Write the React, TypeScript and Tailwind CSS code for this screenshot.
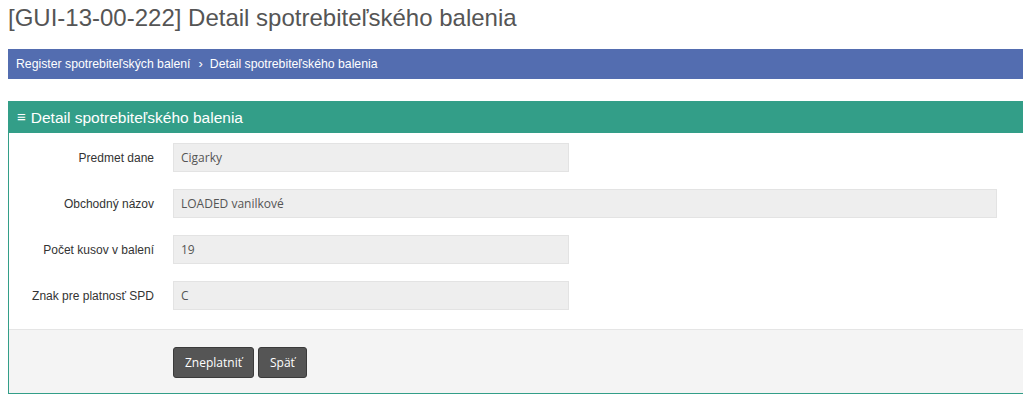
export default function App() {
  const rows: { label: string; value: string; wide?: boolean }[] = [
    { label: "Predmet dane", value: "Cigarky" },
    { label: "Obchodný názov", value: "LOADED vanilkové", wide: true },
    { label: "Počet kusov v balení", value: "19" },
    { label: "Znak pre platnosť SPD", value: "C" },
  ];

  return (
    <div className="h-[400px] w-[1023px] overflow-hidden bg-white font-['Liberation_Sans',Arial,sans-serif]">
      <div className="w-[1060px] pl-2">
        <h1 className="pt-[2px] text-[24px] leading-[32px] text-[#555555]">
          [GUI-13-00-222] Detail spotrebiteľského balenia
        </h1>

        <div className="mt-[15px] flex h-[30px] items-center bg-[#536db0] pl-2 text-[12.25px] text-white">
          <span>Register spotrebiteľských balení</span>
          <span className="ml-[8px] mr-[7px] text-[13px]">›</span>
          <span>Detail spotrebiteľského balenia</span>
        </div>

        <div className="mt-[22px] border border-[#339e88]">
          <div className="flex h-[31px] items-center bg-[#339e88] pl-2 text-[15.5px] text-white">
            <span className="mr-[5px] text-[15px] font-bold">≡</span>
            Detail spotrebiteľského balenia
          </div>

          <div className="flex flex-col gap-[17px] pt-[10px] pb-[19px]">
            {rows.map((r) => (
              <div key={r.label} className="flex items-center">
                <div className="w-[146px] pr-[1px] text-right text-[12px] text-[#333333]">{r.label}</div>
                <div
                  className={
                    (r.wide ? "w-[824px]" : "w-[396px]") +
                    " ml-[18px] flex h-[29px] items-center border border-[#e3e3e3] bg-[#eeeeee] pl-[7px] font-['Open_Sans',sans-serif] text-[12px] text-[#555555]"
                  }
                >
                  {r.value}
                </div>
              </div>
            ))}
          </div>

          <div className="flex h-[64px] items-center gap-[4px] border-t border-[#e5e5e5] bg-[#f4f4f4] pl-[164px] pt-[2px] font-['Open_Sans',sans-serif]">
            <button
              type="button"
              className="h-[31px] rounded-[3px] border border-[#3a3a3a] bg-[#555555] px-[11px] text-[12px] text-white"
            >
              Zneplatniť
            </button>
            <button
              type="button"
              className="h-[31px] rounded-[3px] border border-[#3a3a3a] bg-[#555555] px-[11px] text-[12px] text-white"
            >
              Späť
            </button>
          </div>
        </div>
      </div>
    </div>
  );
}
